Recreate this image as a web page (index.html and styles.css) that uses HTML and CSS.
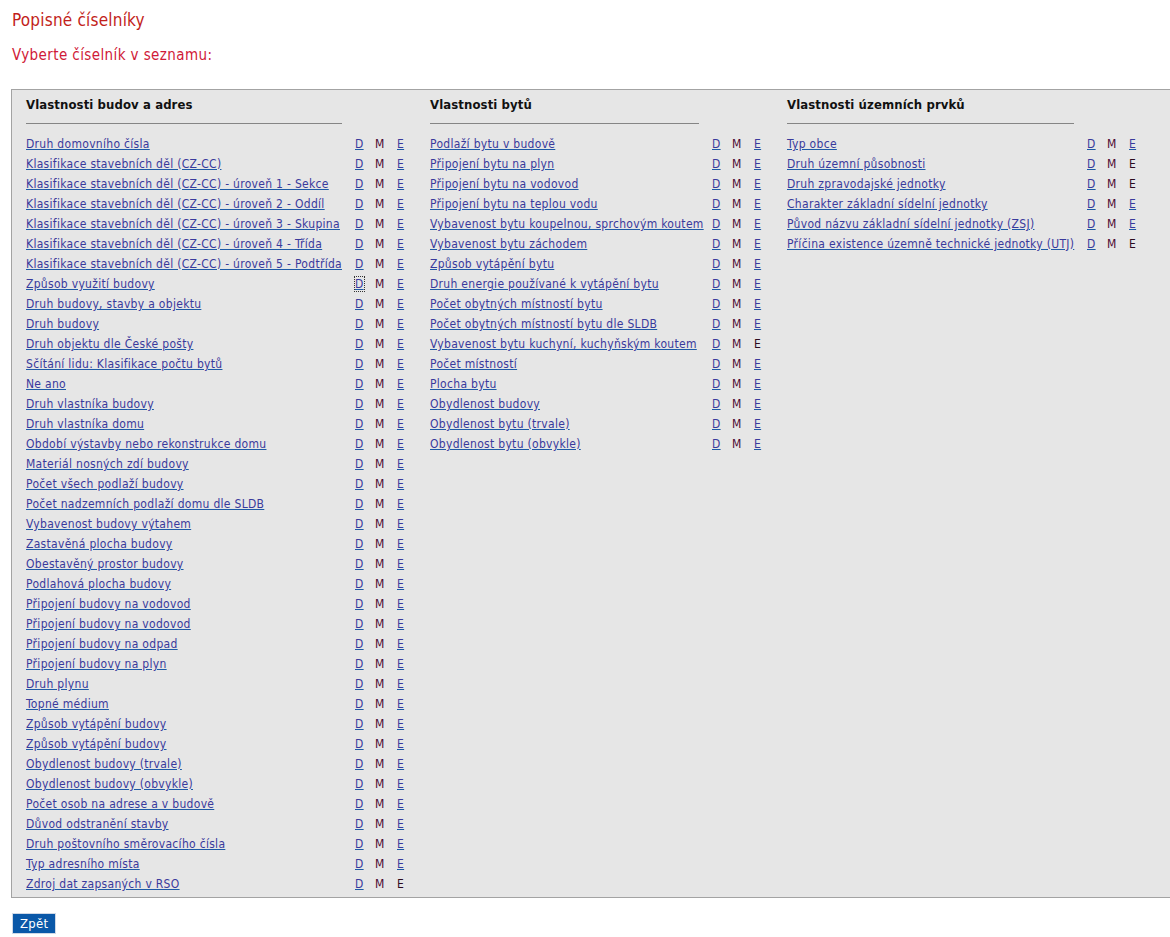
FILE: index.html
```html
<!DOCTYPE html>
<html lang="cs">
<head>
<meta charset="utf-8">
<title>Popisné číselníky</title>
<link rel="stylesheet" href="styles.css">
</head>
<body>
<h1 class="title">Popisné číselníky</h1>
<h2 class="subtitle">Vyberte číselník v seznamu:</h2>
<div class="panel">
  <table class="col col1">
    <colgroup><col class="c-name"><col class="c-d"><col class="c-m"><col class="c-e"></colgroup>
    <thead><tr><th class="head"><div class="head-text">Vlastnosti budov a adres</div><div class="rule"></div></th><th></th><th></th><th></th></tr></thead>
    <tbody>
      <tr><td><a href="#">Druh domovního čísla</a></td><td><a href="#">D</a></td><td class="m">M</td><td><a href="#">E</a></td></tr>
      <tr><td><a href="#">Klasifikace stavebních děl (CZ-CC)</a></td><td><a href="#">D</a></td><td class="m">M</td><td><a href="#">E</a></td></tr>
      <tr><td><a href="#">Klasifikace stavebních děl (CZ-CC) - úroveň 1 - Sekce</a></td><td><a href="#">D</a></td><td class="m">M</td><td><a href="#">E</a></td></tr>
      <tr><td><a href="#">Klasifikace stavebních děl (CZ-CC) - úroveň 2 - Oddíl</a></td><td><a href="#">D</a></td><td class="m">M</td><td><a href="#">E</a></td></tr>
      <tr><td><a href="#">Klasifikace stavebních děl (CZ-CC) - úroveň 3 - Skupina</a></td><td><a href="#">D</a></td><td class="m">M</td><td><a href="#">E</a></td></tr>
      <tr><td><a href="#">Klasifikace stavebních děl (CZ-CC) - úroveň 4 - Třída</a></td><td><a href="#">D</a></td><td class="m">M</td><td><a href="#">E</a></td></tr>
      <tr><td><a href="#">Klasifikace stavebních děl (CZ-CC) - úroveň 5 - Podtřída</a></td><td><a href="#">D</a></td><td class="m">M</td><td><a href="#">E</a></td></tr>
      <tr><td><a href="#">Způsob využití budovy</a></td><td><a href="#" class="focused">D</a></td><td class="m">M</td><td><a href="#">E</a></td></tr>
      <tr><td><a href="#">Druh budovy, stavby a objektu</a></td><td><a href="#">D</a></td><td class="m">M</td><td><a href="#">E</a></td></tr>
      <tr><td><a href="#">Druh budovy</a></td><td><a href="#">D</a></td><td class="m">M</td><td><a href="#">E</a></td></tr>
      <tr><td><a href="#">Druh objektu dle České pošty</a></td><td><a href="#">D</a></td><td class="m">M</td><td><a href="#">E</a></td></tr>
      <tr><td><a href="#">Sčítání lidu: Klasifikace počtu bytů</a></td><td><a href="#">D</a></td><td class="m">M</td><td><a href="#">E</a></td></tr>
      <tr><td><a href="#">Ne ano</a></td><td><a href="#">D</a></td><td class="m">M</td><td><a href="#">E</a></td></tr>
      <tr><td><a href="#">Druh vlastníka budovy</a></td><td><a href="#">D</a></td><td class="m">M</td><td><a href="#">E</a></td></tr>
      <tr><td><a href="#">Druh vlastníka domu</a></td><td><a href="#">D</a></td><td class="m">M</td><td><a href="#">E</a></td></tr>
      <tr><td><a href="#">Období výstavby nebo rekonstrukce domu</a></td><td><a href="#">D</a></td><td class="m">M</td><td><a href="#">E</a></td></tr>
      <tr><td><a href="#">Materiál nosných zdí budovy</a></td><td><a href="#">D</a></td><td class="m">M</td><td><a href="#">E</a></td></tr>
      <tr><td><a href="#">Počet všech podlaží budovy</a></td><td><a href="#">D</a></td><td class="m">M</td><td><a href="#">E</a></td></tr>
      <tr><td><a href="#">Počet nadzemních podlaží domu dle SLDB</a></td><td><a href="#">D</a></td><td class="m">M</td><td><a href="#">E</a></td></tr>
      <tr><td><a href="#">Vybavenost budovy výtahem</a></td><td><a href="#">D</a></td><td class="m">M</td><td><a href="#">E</a></td></tr>
      <tr><td><a href="#">Zastavěná plocha budovy</a></td><td><a href="#">D</a></td><td class="m">M</td><td><a href="#">E</a></td></tr>
      <tr><td><a href="#">Obestavěný prostor budovy</a></td><td><a href="#">D</a></td><td class="m">M</td><td><a href="#">E</a></td></tr>
      <tr><td><a href="#">Podlahová plocha budovy</a></td><td><a href="#">D</a></td><td class="m">M</td><td><a href="#">E</a></td></tr>
      <tr><td><a href="#">Připojení budovy na vodovod</a></td><td><a href="#">D</a></td><td class="m">M</td><td><a href="#">E</a></td></tr>
      <tr><td><a href="#">Připojení budovy na vodovod</a></td><td><a href="#">D</a></td><td class="m">M</td><td><a href="#">E</a></td></tr>
      <tr><td><a href="#">Připojení budovy na odpad</a></td><td><a href="#">D</a></td><td class="m">M</td><td><a href="#">E</a></td></tr>
      <tr><td><a href="#">Připojení budovy na plyn</a></td><td><a href="#">D</a></td><td class="m">M</td><td><a href="#">E</a></td></tr>
      <tr><td><a href="#">Druh plynu</a></td><td><a href="#">D</a></td><td class="m">M</td><td><a href="#">E</a></td></tr>
      <tr><td><a href="#">Topné médium</a></td><td><a href="#">D</a></td><td class="m">M</td><td><a href="#">E</a></td></tr>
      <tr><td><a href="#">Způsob vytápění budovy</a></td><td><a href="#">D</a></td><td class="m">M</td><td><a href="#">E</a></td></tr>
      <tr><td><a href="#">Způsob vytápění budovy</a></td><td><a href="#">D</a></td><td class="m">M</td><td><a href="#">E</a></td></tr>
      <tr><td><a href="#">Obydlenost budovy (trvale)</a></td><td><a href="#">D</a></td><td class="m">M</td><td><a href="#">E</a></td></tr>
      <tr><td><a href="#">Obydlenost budovy (obvykle)</a></td><td><a href="#">D</a></td><td class="m">M</td><td><a href="#">E</a></td></tr>
      <tr><td><a href="#">Počet osob na adrese a v budově</a></td><td><a href="#">D</a></td><td class="m">M</td><td><a href="#">E</a></td></tr>
      <tr><td><a href="#">Důvod odstranění stavby</a></td><td><a href="#">D</a></td><td class="m">M</td><td><a href="#">E</a></td></tr>
      <tr><td><a href="#">Druh poštovního směrovacího čísla</a></td><td><a href="#">D</a></td><td class="m">M</td><td><a href="#">E</a></td></tr>
      <tr><td><a href="#">Typ adresního místa</a></td><td><a href="#">D</a></td><td class="m">M</td><td><a href="#">E</a></td></tr>
      <tr><td><a href="#">Zdroj dat zapsaných v RSO</a></td><td><a href="#">D</a></td><td class="m">M</td><td class="e">E</td></tr>
    </tbody>
  </table>
  <table class="col col2">
    <colgroup><col class="c-name"><col class="c-d"><col class="c-m"><col class="c-e"></colgroup>
    <thead><tr><th class="head"><div class="head-text">Vlastnosti bytů</div><div class="rule"></div></th><th></th><th></th><th></th></tr></thead>
    <tbody>
      <tr><td><a href="#">Podlaží bytu v budově</a></td><td><a href="#">D</a></td><td class="m">M</td><td><a href="#">E</a></td></tr>
      <tr><td><a href="#">Připojení bytu na plyn</a></td><td><a href="#">D</a></td><td class="m">M</td><td><a href="#">E</a></td></tr>
      <tr><td><a href="#">Připojení bytu na vodovod</a></td><td><a href="#">D</a></td><td class="m">M</td><td><a href="#">E</a></td></tr>
      <tr><td><a href="#">Připojení bytu na teplou vodu</a></td><td><a href="#">D</a></td><td class="m">M</td><td><a href="#">E</a></td></tr>
      <tr><td><a href="#">Vybavenost bytu koupelnou, sprchovým koutem</a></td><td><a href="#">D</a></td><td class="m">M</td><td><a href="#">E</a></td></tr>
      <tr><td><a href="#">Vybavenost bytu záchodem</a></td><td><a href="#">D</a></td><td class="m">M</td><td><a href="#">E</a></td></tr>
      <tr><td><a href="#">Způsob vytápění bytu</a></td><td><a href="#">D</a></td><td class="m">M</td><td><a href="#">E</a></td></tr>
      <tr><td><a href="#">Druh energie používané k vytápění bytu</a></td><td><a href="#">D</a></td><td class="m">M</td><td><a href="#">E</a></td></tr>
      <tr><td><a href="#">Počet obytných místností bytu</a></td><td><a href="#">D</a></td><td class="m">M</td><td><a href="#">E</a></td></tr>
      <tr><td><a href="#">Počet obytných místností bytu dle SLDB</a></td><td><a href="#">D</a></td><td class="m">M</td><td><a href="#">E</a></td></tr>
      <tr><td><a href="#">Vybavenost bytu kuchyní, kuchyňským koutem</a></td><td><a href="#">D</a></td><td class="m">M</td><td class="e">E</td></tr>
      <tr><td><a href="#">Počet místností</a></td><td><a href="#">D</a></td><td class="m">M</td><td><a href="#">E</a></td></tr>
      <tr><td><a href="#">Plocha bytu</a></td><td><a href="#">D</a></td><td class="m">M</td><td><a href="#">E</a></td></tr>
      <tr><td><a href="#">Obydlenost budovy</a></td><td><a href="#">D</a></td><td class="m">M</td><td><a href="#">E</a></td></tr>
      <tr><td><a href="#">Obydlenost bytu (trvale)</a></td><td><a href="#">D</a></td><td class="m">M</td><td><a href="#">E</a></td></tr>
      <tr><td><a href="#">Obydlenost bytu (obvykle)</a></td><td><a href="#">D</a></td><td class="m">M</td><td><a href="#">E</a></td></tr>
    </tbody>
  </table>
  <table class="col col3">
    <colgroup><col class="c-name"><col class="c-d"><col class="c-m"><col class="c-e"></colgroup>
    <thead><tr><th class="head"><div class="head-text">Vlastnosti územních prvků</div><div class="rule"></div></th><th></th><th></th><th></th></tr></thead>
    <tbody>
      <tr><td><a href="#">Typ obce</a></td><td><a href="#">D</a></td><td class="m">M</td><td><a href="#">E</a></td></tr>
      <tr><td><a href="#">Druh územní působnosti</a></td><td><a href="#">D</a></td><td class="m">M</td><td class="e">E</td></tr>
      <tr><td><a href="#">Druh zpravodajské jednotky</a></td><td><a href="#">D</a></td><td class="m">M</td><td class="e">E</td></tr>
      <tr><td><a href="#">Charakter základní sídelní jednotky</a></td><td><a href="#">D</a></td><td class="m">M</td><td><a href="#">E</a></td></tr>
      <tr><td><a href="#">Původ názvu základní sídelní jednotky (ZSJ)</a></td><td><a href="#">D</a></td><td class="m">M</td><td><a href="#">E</a></td></tr>
      <tr><td><a href="#">Příčina existence územně technické jednotky (UTJ)</a></td><td><a href="#">D</a></td><td class="m">M</td><td class="e">E</td></tr>
    </tbody>
  </table>
</div>
<button class="back" type="button">Zpět</button>
</body>
</html>
```
FILE: styles.css
```css
html, body {
  overflow-x: hidden;
}
body {
  margin: 0;
  padding: 8px 0 0 12px;
  font-family: "DejaVu Sans Condensed", "DejaVu Sans", sans-serif;
  font-size: 12px;
  background: #ffffff;
  color: #222;
}
.title {
  margin: 0;
  font-size: 17px;
  font-weight: normal;
  line-height: 24px;
  letter-spacing: 0.2px;
  color: #c21e1a;
}
.subtitle {
  margin: 13px 0 0 0;
  font-size: 15px;
  font-weight: normal;
  line-height: 20px;
  letter-spacing: 0.4px;
  color: #d01a38;
}
.panel {
  display: flex;
  align-items: flex-start;
  margin: 24px 0 0 -1px;
  width: 1180px;
  box-sizing: border-box;
  border: 1px solid #a3a3a3;
  background: #e6e6e6;
  padding: 5px 0 3px 14px;
}
.col {
  border-collapse: collapse;
  table-layout: fixed;
  flex: none;
}
.col1 { width: 404px; }
.col2 { width: 357px; }
.col3 { width: 380px; }
.col1 .c-name { width: 329px; }
.col2 .c-name { width: 282px; }
.col3 .c-name { width: 300px; }
.c-d { width: 20px; }
.c-m { width: 22px; }
.c-e { width: 33px; }
.col3 .c-e { width: 58px; }
.col td, .col th {
  padding: 0;
  white-space: nowrap;
  vertical-align: middle;
  text-align: left;
  letter-spacing: 0.3px;
}
.col td {
  height: 20px;
  line-height: 20px;
}
.head {
  padding-right: 13px !important;
  vertical-align: top;
}
.head-text {
  font-size: 13px;
  font-weight: bold;
  line-height: 20px;
  letter-spacing: 0.1px;
  color: #111;
}
.rule {
  margin: 8px 0 10px 0;
  border-top: 1px solid #858585;
}
.col a {
  color: #3a3a9c;
  text-decoration: underline;
  text-decoration-color: #1d5aa6;
}
.col a.focused {
  outline: 1px dotted #333;
  outline-offset: 0;
}
.m {
  color: #4c0832;
}
.e {
  color: #2c0a1e;
}
.back {
  display: block;
  margin: 15px 0 0 0;
  height: 21px;
  padding: 0 7px;
  border: 1px solid #cfd8e6;
  background: #0a58a8;
  color: #fff;
  font-family: "DejaVu Sans Condensed", "DejaVu Sans", sans-serif;
  font-size: 13px;
  line-height: 18px;
  letter-spacing: 0.3px;
  cursor: pointer;
}
```
